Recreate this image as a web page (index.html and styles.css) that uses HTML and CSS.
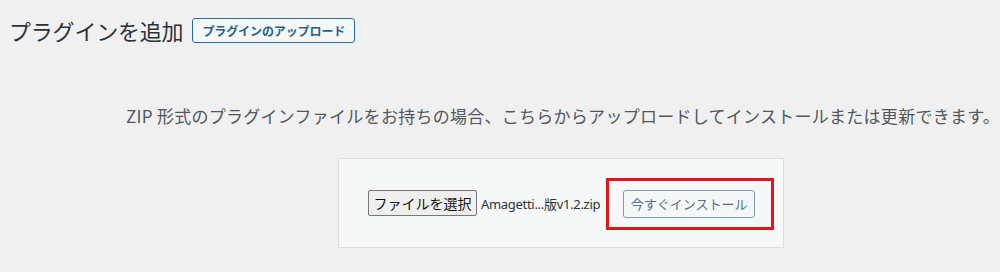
FILE: index.html
```html
<!DOCTYPE html>
<html lang="ja">
<head>
<meta charset="utf-8">
<link rel="stylesheet" href="styles.css">
</head>
<body>
<div class="page">
  <div class="head">
    <h1 class="title">プラグインを追加</h1>
    <span class="upload-btn">プラグインのアップロード</span>
  </div>
  <div class="upload">
    <p class="help">ZIP 形式のプラグインファイルをお持ちの場合、こちらからアップロードしてインストールまたは更新できます。</p>
    <div class="card">
      <span class="file-btn">ファイルを選択</span>
      <span class="file-name">Amagetti...版v1.2.zip</span>
      <span class="mark">
        <span class="install-btn">今すぐインストール</span>
      </span>
    </div>
  </div>
</div>
</body>
</html>
```
FILE: styles.css
```css
html, body {
  margin: 0;
  padding: 0;
  background: #f0f0f1;
}
body {
  font-family: "Noto Sans", "Noto Sans CJK JP", sans-serif;
  color: #3c434a;
}
.page {
  padding: 16px 0 0 9px;
}
.head {
  display: flex;
  align-items: center;
  gap: 9px;
  height: 28px;
}
.title {
  margin: 0;
  font-family: "Noto Sans CJK JP", sans-serif;
  font-weight: 400;
  font-size: 22px;
  line-height: 28px;
  color: #2c3338;
  letter-spacing: -0.2px;
}
.upload-btn {
  display: inline-flex;
  align-items: center;
  box-sizing: border-box;
  height: 25px;
  padding: 0 9px;
  border: 1px solid #2271b1;
  border-radius: 3px;
  background: #f6f7f7;
  color: #1f5f95;
  font-family: "Noto Sans CJK JP", sans-serif;
  font-size: 12px;
  font-weight: 700;
  letter-spacing: -0.1px;
}
.upload {
  padding-left: 113px;
}
.help {
  margin: 60px 0 0 0;
  padding-left: 4px;
  white-space: nowrap;
  font-family: "Noto Sans CJK JP", sans-serif;
  font-size: 17px;
  line-height: 24px;
  color: #50575e;
  letter-spacing: 0.27px;
}
.card {
  width: 446px;
  height: 90px;
  box-sizing: border-box;
  margin: 30px auto 0;
  border: 1px solid #dcdcde;
  background: #f6f7f7;
  display: flex;
  align-items: center;
  padding-left: 29px;
}
.file-btn {
  display: inline-flex;
  align-items: center;
  justify-content: center;
  box-sizing: border-box;
  width: 109px;
  height: 26px;
  border: 1px solid #767676;
  border-radius: 2px;
  background: #efefef;
  color: #111;
  font-family: "Noto Sans CJK JP", sans-serif;
  font-size: 14px;
}
.file-name {
  margin-left: 4px;
  font-family: "Noto Sans", "Noto Sans CJK JP", sans-serif;
  font-size: 13px;
  color: #2c3338;
  letter-spacing: -0.3px;
}
.mark {
  display: flex;
  align-items: center;
  box-sizing: border-box;
  width: 168px;
  height: 52px;
  margin-left: 6px;
  margin-top: 1px;
  border: 3px solid #e3141b;
  padding-left: 14px;
}
.install-btn {
  display: inline-flex;
  align-items: center;
  justify-content: center;
  box-sizing: border-box;
  width: 132px;
  height: 28px;
  border: 1px solid #7f9bb0;
  border-radius: 3px;
  background: #f4f7f8;
  color: #56708a;
  font-family: "Noto Sans CJK JP", sans-serif;
  font-size: 13px;
}
```
